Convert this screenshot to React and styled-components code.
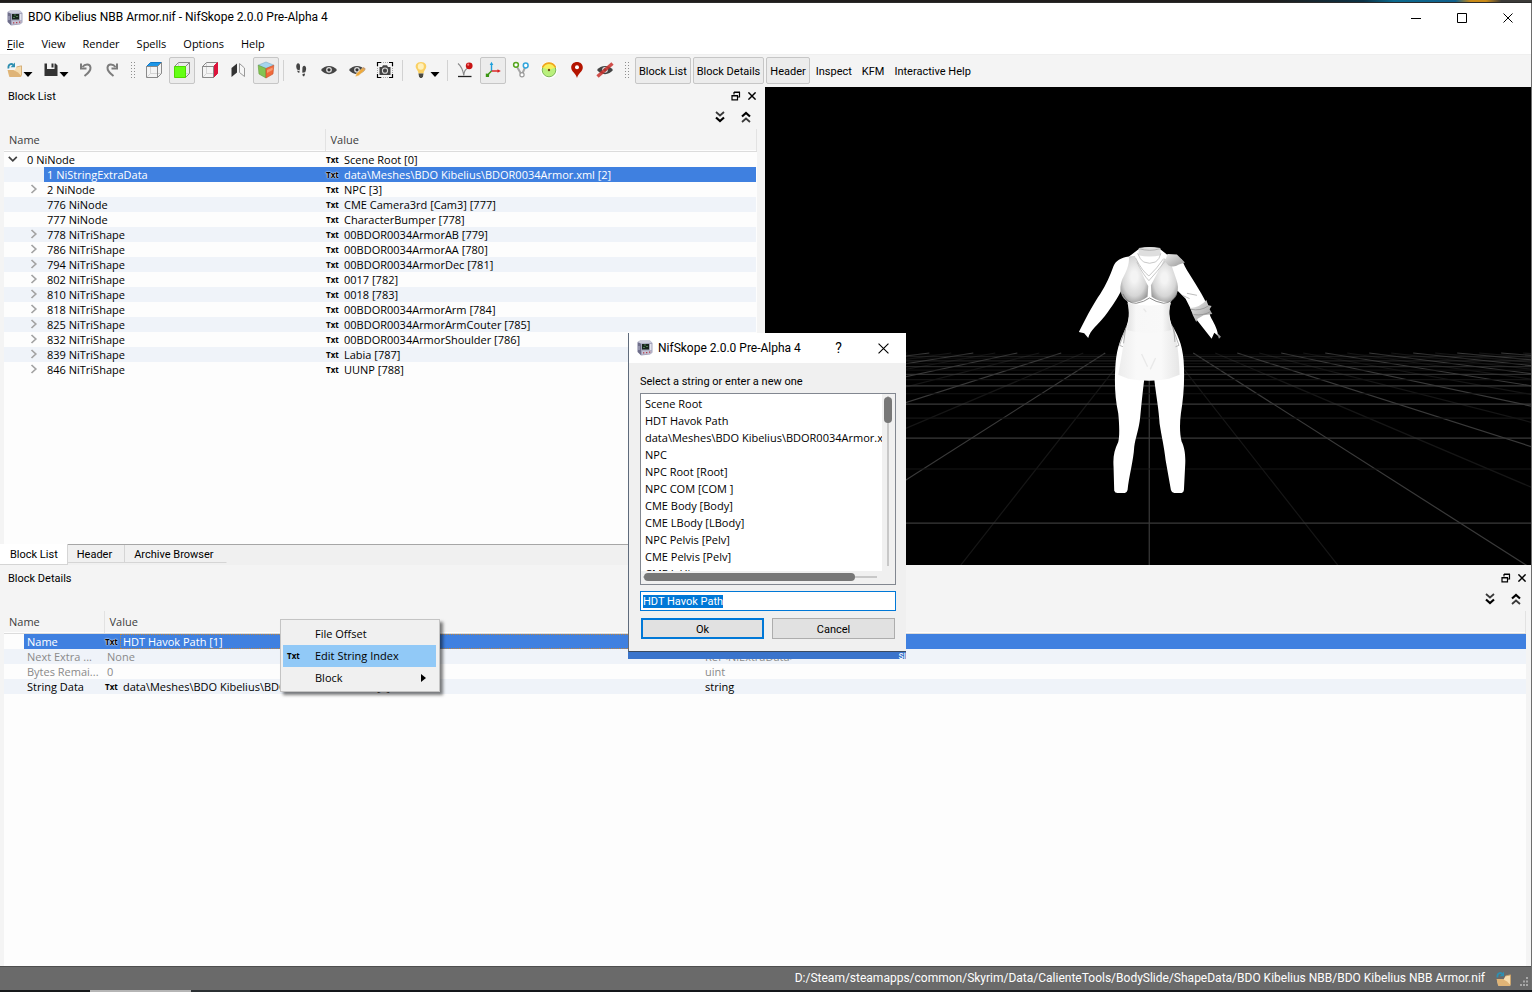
import React, { useEffect, useRef } from "react";
import styled, { createGlobalStyle, css } from "styled-components";

const uiFont = `Roboto, "Liberation Sans", sans-serif`;
const treeFont = `"Open Sans", "Noto Sans", sans-serif`;

const GlobalStyle = createGlobalStyle`
  * {
    box-sizing: border-box;
  }
  body {
    margin: 0;
    background-color: #f4f4f4;
    color: #000;
    font-family: ${uiFont};
    font-size: 11px;
    line-height: 15px;
    white-space: nowrap;
  }
  button, input {
    font: inherit;
    color: inherit;
  }
  svg {
    display: block;
    flex-shrink: 0;
  }
`;

/* window */
const Screen = styled.div`
  min-height: 100vh;
  display: flex;
  flex-direction: column;
  position: relative;
`;
const DesktopStrip = styled.div`
  height: 3px;
  background: linear-gradient(to right, #1f1d1c 0 83%, #0b3347 89%, #0c6a8e 91%, #10608c 95%, #c98a17 96% 97%, #3b3a38 98%);
  border-bottom: 1px solid #2b2b2b;
`;
const TaskbarStrip = styled.div`
  height: 2px;
  background: linear-gradient(to right, #17191b 0 90px, #b5b5b5 90px 191px, #2b3033 191px 250px, #14171a 250px);
`;
const Window = styled.div`
  flex: 1;
  display: flex;
  flex-direction: column;
  border-right: 1px solid #6e6e6e;
`;
const TitleBar = styled.header`
  height: 29px;
  padding-left: 7px;
  display: flex;
  align-items: center;
  background-color: #fff;
`;
const Title = styled.h1`
  margin: 0 0 0 5px;
  flex: 1;
  font-size: 12px;
  font-weight: 400;
`;
const CaptionBtn = styled.button`
  width: ${(props) => props.$width || 46}px;
  height: 29px;
  padding: 0;
  border: 0;
  background-color: transparent;
  display: flex;
  justify-content: center;
  align-items: center;
`;
const HelpBtn = styled(CaptionBtn)`
  font-size: 14px;
`;
const MenuBar = styled.nav`
  height: 23px;
  padding: 1px 7px 0;
  display: flex;
  align-items: center;
  gap: 17px;
  background-color: #fff;
  border-bottom: 1px solid #efefef;
  font-family: ${treeFont};
`;
const MenuBtn = styled.button`
  padding: 0;
  border: 0;
  background-color: transparent;
`;
const ToolBar = styled.div`
  height: 32px;
  padding: 0 0 2px 2px;
  display: flex;
  align-items: center;
  gap: 2px;
`;
const ToolBtn = styled.button`
  width: ${(props) => props.$width || 26}px;
  height: 27px;
  padding: 0;
  border: 1px solid transparent;
  border-radius: 2px;
  background-color: transparent;
  display: flex;
  justify-content: center;
  align-items: center;
  ${(props) =>
    props.$checked &&
    css`
      border-color: #c6c6c6;
      background-color: #ececec;
    `}
`;
const SplitBtn = styled(ToolBtn)`
  padding-left: 4px;
  justify-content: flex-start;
`;
const TextBtn = styled(ToolBtn)`
  width: auto;
  padding: 2px 3px 0;
`;
const Grip = styled.div`
  width: 13px;
  height: 18px;
  border: solid transparent;
  border-width: 0 4px;
  background-image: radial-gradient(#8f8f8f 1px, transparent 1px);
  background-size: 3px 3px;
  background-clip: padding-box;
`;
const Separator = styled.div`
  width: 5px;
  height: 21px;
  border-left: 2px solid transparent;
  border-right: 2px solid transparent;
  background-color: #d2d2d2;
  background-clip: padding-box;
`;

/* docks */
const Work = styled.main`
  flex: 1;
  display: grid;
  grid-template-rows: 478fr 401fr;
`;
const Upper = styled.div`
  display: grid;
  grid-template-columns: calc(50% - 1px) 1fr;
  min-height: 0;
`;
const Dock = styled.section`
  display: flex;
  flex-direction: column;
  min-width: 0;
  padding-top: ${(props) => props.$top || 0}px;
`;
const DockTitle = styled.div`
  height: 18px;
  padding: 0 ${(props) => props.$right}px 0 8px;
  display: flex;
  align-items: center;
`;
const DockName = styled.h2`
  margin: 0;
  flex: 1;
  font-size: 11px;
  font-weight: 400;
`;
const DockTools = styled.div`
  height: 24px;
  padding-right: ${(props) => props.$right}px;
  display: flex;
  justify-content: flex-end;
  align-items: center;
  gap: 4px;
`;
const SmallBtn = styled.button`
  width: ${(props) => props.$width || 16}px;
  height: 16px;
  padding: 0;
  border: 0;
  background-color: transparent;
  display: flex;
  justify-content: center;
  align-items: center;
`;
const TreeBox = styled.div`
  flex: 1;
  margin-left: 4px;
  margin-right: ${(props) => props.$right}px;
  background: linear-gradient(#f4f4f4 21px, #fdfdfd 21px);
  font-family: ${treeFont};
`;
const Tree = styled.table`
  width: 100%;
  table-layout: fixed;
  border-collapse: collapse;
`;
const Th = styled.th`
  height: 22px;
  padding: 0 5px 1px;
  text-align: left;
  font-size: 11px;
  font-weight: 400;
  color: #3c3c3c;
  border-right: 1px solid #e2e2e2;
  border-bottom: 1px solid #dcdcdc;
`;
const Tr = styled.tr`
  height: 15px;
  color: ${(props) => (props.$disabled ? "#8a8a8a" : "#000")};
  &:nth-child(even) {
    background-color: #eff3f9;
  }
`;
const Td = styled.td`
  padding: 0;
`;
const Cell = styled.div`
  height: 15px;
  display: flex;
  align-items: center;
`;
const Branch = styled.span`
  width: ${(props) => (props.$level + 1) * 20}px;
  padding-right: 6px;
  display: flex;
  justify-content: flex-end;
  flex-shrink: 0;
`;
const CellText = styled.span`
  flex: 1;
  min-width: 0;
  height: 15px;
  padding-left: 3px;
  overflow: hidden;
  text-overflow: ellipsis;
  line-height: 15px;
  outline: ${(props) => (props.$focused ? "1px dotted #c0863c" : "0")};
  outline-offset: -1px;
  ${(props) =>
    props.$selected &&
    css`
      background-color: #3f80e0;
      color: #fff;
    `}
`;
const TxtTag = styled.span`
  width: 16px;
  height: 15px;
  padding-left: 1px;
  flex-shrink: 0;
  color: #000;
  font-size: 8px;
  line-height: 15px;
  font-weight: 700;
  ${(props) =>
    props.$selected &&
    css`
      background-color: #3f80e0;
      text-shadow: 0 0 2px #fff, 0 0 1px #fff;
    `}
`;
const Tabs = styled.div`
  height: 21px;
  display: flex;
  align-items: flex-start;
  border-top: 1px solid #a6a6a6;
  background-color: #f0f0f0;
`;
const Tab = styled.button`
  height: ${(props) => (props.$active ? 21 : 18)}px;
  margin-top: ${(props) => (props.$active ? -1 : 0)}px;
  padding: 1px ${(props) => (props.$active ? 9 : 12)}px 0 ${(props) => (props.$active ? 10 : 9)}px;
  border: 0;
  border-right: 1px solid #d5d5d5;
  border-bottom: 1px solid #d5d5d5;
  background-color: ${(props) => (props.$active ? "#fff" : "#f0f0f0")};
  &:last-child {
    border-right-color: transparent;
  }
`;
const View = styled.div`
  background-color: #000;
  min-height: 0;
  min-width: 0;
  overflow: hidden;
  contain: size;
  svg {
    width: 100%;
    height: 100%;
  }
`;
const StatusBar = styled.footer`
  height: 24px;
  padding-right: 2px;
  display: flex;
  justify-content: flex-end;
  align-items: center;
  gap: 11px;
  background-color: #6a6a6a;
  border-top: 1px solid #4e4e4e;
  color: #fff;
  font-size: 12px;
`;
const StatusIcons = styled.div`
  display: flex;
  align-items: flex-end;
  gap: 7px;
`;

/* context menu */
const ContextMenu = styled.div`
  position: absolute;
  left: 280px;
  top: 619px;
  width: 160px;
  padding: 3px 3px 2px 2px;
  border: 1px solid #c4c4c4;
  background-color: #f0f0f0;
  box-shadow: 3px 3px 3px rgba(0, 0, 0, 0.5);
  font-family: ${treeFont};
`;
const ContextItem = styled.button`
  width: 100%;
  height: 22px;
  padding: 0 10px 1px 4px;
  border: 0;
  display: flex;
  align-items: center;
  text-align: left;
  background-color: ${(props) => (props.$active ? "#91c9f7" : "transparent")};
`;
const ContextIcon = styled.span`
  width: 28px;
  font-size: 8px;
  font-weight: 700;
`;
const ContextLabel = styled.span`
  flex: 1;
`;

/* dialog */
const DialogBox = styled.div`
  position: absolute;
  left: 628px;
  top: 333px;
  width: 278px;
`;
const Dialog = styled.form`
  background-color: #f0f0f0;
  border-left: 1px solid #5f6b7c;
  border-bottom: 1px solid #3a4a60;
`;
const DialogTitle = styled.div`
  height: 30px;
  padding-left: 8px;
  display: flex;
  align-items: center;
  background-color: #fff;
  font-size: 12px;
`;
const DialogName = styled.span`
  margin-left: 5px;
  flex: 1;
`;
const DialogBody = styled.div`
  padding: 11px 10px 12px 11px;
  display: flex;
  flex-direction: column;
`;
const DialogLabel = styled.label`
  height: 19px;
`;
const ListBox = styled.div`
  height: 192px;
  border: 1px solid #828790;
  padding: 2px 0 0 2px;
  display: grid;
  grid-template-columns: 1fr 13px;
  grid-template-rows: 1fr 13px;
  background-color: #f0f0f0;
`;
const List = styled.ul`
  margin: -2px 0 0 -2px;
  padding: 1px 0 0 4px;
  min-height: 0;
  min-width: 0;
  overflow: hidden;
  list-style: none;
  font-family: ${treeFont};
  background-color: #fff;
`;
const ListItem = styled.li`
  height: 17px;
  line-height: 17px;
`;
const VTrack = styled.div`
  margin: 0 0 5px 5px;
  border-left: 2px solid #c8c8c8;
`;
const VThumb = styled.div`
  width: 8px;
  height: 26px;
  margin: 1px 0 0 -5px;
  border-radius: 4px;
  background-color: #777;
`;
const HTrack = styled.div`
  margin: 5px 5px 0 0;
  border-top: 2px solid #c8c8c8;
`;
const HThumb = styled.div`
  width: 90%;
  height: 8px;
  margin: -5px 0 0 1px;
  border-radius: 4px;
  background-color: #777;
`;
const TextInput = styled.input`
  height: 20px;
  margin-top: 6px;
  padding: 1px 2px 0;
  border: 1px solid #0078d7;
  outline: 0;
  background-color: #fff;
  &::selection {
    background-color: #0078d7;
    color: #fff;
  }
`;
const DialogBtns = styled.div`
  margin: 7px 1px 0;
  display: grid;
  grid-template-columns: 1fr 1fr;
  gap: 8px;
`;
const DialogBtn = styled.button`
  height: 21px;
  padding: 1px 0 0;
  border: ${(props) => (props.$primary ? "2px solid #0078d7" : "1px solid #adadad")};
  background-color: #e1e1e1;
`;
const DialogTrail = styled.div`
  height: 7px;
  overflow: hidden;
  background-color: #3a74cc;
  color: #fff;
  text-align: right;
  font-size: 10px;
  line-height: 7px;
`;

const blocks = [
  { id: "0 NiNode", value: "Scene Root [0]", level: 0, open: true },
  { id: "1 NiStringExtraData", value: "data\\Meshes\\BDO Kibelius\\BDOR0034Armor.xml [2]", level: 1, leaf: true, selected: true },
  { id: "2 NiNode", value: "NPC [3]", level: 1 },
  { id: "776 NiNode", value: "CME Camera3rd [Cam3] [777]", level: 1, leaf: true },
  { id: "777 NiNode", value: "CharacterBumper [778]", level: 1, leaf: true },
  { id: "778 NiTriShape", value: "00BDOR0034ArmorAB [779]", level: 1 },
  { id: "786 NiTriShape", value: "00BDOR0034ArmorAA [780]", level: 1 },
  { id: "794 NiTriShape", value: "00BDOR0034ArmorDec [781]", level: 1 },
  { id: "802 NiTriShape", value: "0017 [782]", level: 1 },
  { id: "810 NiTriShape", value: "0018 [783]", level: 1 },
  { id: "818 NiTriShape", value: "00BDOR0034ArmorArm [784]", level: 1 },
  { id: "825 NiTriShape", value: "00BDOR0034ArmorArmCouter [785]", level: 1 },
  { id: "832 NiTriShape", value: "00BDOR0034ArmorShoulder [786]", level: 1 },
  { id: "839 NiTriShape", value: "Labia [787]", level: 1 },
  { id: "846 NiTriShape", value: "UUNP [788]", level: 1 },
];

const details = [
  { name: "Name", value: "HDT Havok Path [1]", type: "string", txt: true, selected: true },
  { name: "Next Extra ...", value: "None", type: "Ref<NiExtraData>", disabled: true },
  { name: "Bytes Remai...", value: "0", type: "uint", disabled: true },
  { name: "String Data", value: "data\\Meshes\\BDO Kibelius\\BDOR0034Armor.xml [2]", type: "string", txt: true },
];

const strings = [
  "Scene Root",
  "HDT Havok Path",
  "data\\Meshes\\BDO Kibelius\\BDOR0034Armor.xml",
  "NPC",
  "NPC Root [Root]",
  "NPC COM [COM ]",
  "CME Body [Body]",
  "CME LBody [LBody]",
  "NPC Pelvis [Pelv]",
  "CME Pelvis [Pelv]",
  "CME L Hip",
];

/* icons */
const AppIcon = () => (
  <svg width="16" height="16" viewBox="0 0 16 16">
    <path d="M0.5 2 L3 0.5 H13 L15.5 3 V12.5 L13 14.5 L4 15.5 L0.5 12 Z" fill="#a3a3bb" />
    <path d="M0.8 2.5 L4 3.5 V15 L0.8 12 Z" fill="#6e6e8a" />
    <path d="M1 2 L3 0.8 H13 L15 2.8 L4 3.5 Z" fill="#cdcddd" />
    <rect x="5" y="4" width="7" height="5.5" fill="#18241d" />
    <path d="M7 5 H9 M6 7.5 H8 M9 6.5 H11" stroke="#4d7d55" fill="none" />
    <rect x="13" y="4" width="1.5" height="6" fill="#e4e4ee" />
    <path d="M5 10.8 L14.5 10.5 V13.5 L5 14.5 Z" fill="#c3c3d4" />
    <path d="M6 12.8 H7.3 M9 12.6 H10.3 M12 12.2 H13.3" stroke="#b33a48" strokeWidth="1.3" />
    <path d="M2 6 V10" stroke="#b5b5cb" />
  </svg>
);
const DropArrow = () => (
  <svg width="10" height="16" viewBox="0 0 10 16">
    <path d="M0.5 10 H9.5 L5 15 Z" fill="#000" />
  </svg>
);
const FolderIcon = () => (
  <svg width="16" height="16" viewBox="0 0 16 16">
    <path d="M1 8.5 H7.5 L9.5 5 L14.5 4 V14.5 H2 Z" fill="#f6dcae" />
    <path d="M0.5 8 H6.5 L11 10.5 L14.5 14 L13.5 15 H2.5 Z" fill="#dfb477" />
    <path d="M9.5 5 L14.5 3.8 V13.5" stroke="#cfa263" strokeWidth="0.8" fill="none" />
    <path d="M1.5 6.5 C0.8 2.5 4 1 6.3 2.8" stroke="#2e8fb0" strokeWidth="1.8" fill="none" />
    <path d="M8 0.5 V5.2 H3.6 Z" fill="#2e8fb0" />
  </svg>
);
const SaveIcon = () => (
  <svg width="16" height="16" viewBox="0 0 16 16">
    <path d="M1.5 1.5 H4 V7 H11.5 V1.5 H12.5 L14.5 3.5 V14 H1.5 Z" fill="#333" />
    <rect x="8.5" y="1.5" width="2" height="4" fill="#333" />
  </svg>
);
const UndoIcon = () => (
  <svg width="16" height="16" viewBox="0 0 16 16">
    <path d="M4.5 5 C7 1.5 12 1.5 12.5 5.5 C12.8 8.5 10.5 11 6.5 14" stroke="#7c7c7c" strokeWidth="2" fill="none" />
    <path d="M3 1.5 V6.6 H8.5" stroke="#7c7c7c" strokeWidth="2" fill="none" />
  </svg>
);
const RedoIcon = () => (
  <svg width="16" height="16" viewBox="0 0 16 16">
    <path d="M11.5 5 C9 1.5 4 1.5 3.5 5.5 C3.2 8.5 5.5 11 9.5 14" stroke="#7c7c7c" strokeWidth="2" fill="none" />
    <path d="M13 1.5 V6.6 H7.5" stroke="#7c7c7c" strokeWidth="2" fill="none" />
  </svg>
);
const CubeIcon = ({ top, front, side }) => (
  <svg width="18" height="18" viewBox="0 0 18 18">
    <path d="M5.5 1.5 V12.5 M5.5 12.5 H16.5 M5.5 12.5 L1.5 16.5" stroke="#cdcdcd" strokeWidth="0.8" />
    <path d="M1.5 5.5 L5.5 1.5 H16.5 L12.5 5.5 Z" fill={top || "none"} stroke={top ? "#0f78c8" : "#8a8a8a"} />
    <path d="M12.5 5.5 L16.5 1.5 V12.5 L12.5 16.5 Z" fill={side || "none"} stroke={side || "#8a8a8a"} />
    <path d="M1.5 5.5 H12.5 V16.5 H1.5 Z" fill={front || "none"} stroke={front ? "#4fd800" : "#8a8a8a"} />
  </svg>
);
const FlipIcon = () => (
  <svg width="16" height="16" viewBox="0 0 16 16">
    <path d="M7 1.5 V10.5 L1.5 15 V6 Z" fill="#333" />
    <path d="M9.5 1.5 L14.5 6 V14.5 L9.5 10.5 Z" fill="#f6f6f6" stroke="#999" />
  </svg>
);
const PerspectiveIcon = () => (
  <svg width="18" height="18" viewBox="0 0 18 18">
    <path d="M1.2 4.2 L9 1 L16.8 4.2 L9 7.5 Z" fill="#a5d4ee" stroke="#7fa9c2" strokeWidth="0.6" />
    <path d="M1.2 4.2 L9 7.5 V17 L2 13 Z" fill="#84c452" stroke="#5f9a3a" strokeWidth="0.6" />
    <path d="M16.8 4.2 L9 7.5 V17 L16 13 Z" fill="#f0693a" stroke="#c9522a" strokeWidth="0.6" />
    <path d="M10 9 L15.6 6.4 V9 L10 12 Z" fill="#f79a70" />
  </svg>
);
const StepsIcon = () => (
  <svg width="16" height="16" viewBox="0 0 16 16">
    <path d="M3.6 2.5 C4.8 0.2 7 1.5 7 4 C7 6 7 7 6.6 8.4 L4 7.6 C3.4 6 2.8 4.2 3.6 2.5 Z" fill="#444" />
    <path d="M4.2 8.6 L6.6 9.2 C6.8 11.4 4.6 11.4 4.2 8.6 Z" fill="#444" />
    <path d="M12.8 5 C11.6 2.8 9.4 4 9.4 6.4 C9.4 8.4 9.2 9.4 9.4 10.8 L12.2 10.2 C12.9 8.5 13.6 6.8 12.8 5 Z" fill="#444" />
    <path d="M12 11.4 L9.5 11.9 C9.3 15.2 12 14.9 12 11.4 Z" fill="#444" />
  </svg>
);
const EyeIcon = ({ pencil, slash }) => (
  <svg width="18" height="16" viewBox="0 0 18 16">
    <path d="M1 8 C5 2.5 13 2.5 17 8 C13 13.5 5 13.5 1 8 Z" fill="#444" />
    <circle cx="9" cy="7.8" r="2.9" fill="#ddd" />
    <circle cx="9" cy="7.8" r="1.6" fill="#333" />
    {pencil && (
      <>
        <path d="M7.5 14.5 L8.5 11.5 L14.5 6 L16.8 8 L10.8 13.6 Z" fill="#efa93a" stroke="#f7e2bd" strokeWidth="0.5" />
        <path d="M14.5 6 L15.6 5 L17.8 7 L16.8 8 Z" fill="#c96" />
      </>
    )}
    {slash && <path d="M1.5 14.5 L16.5 1.5" stroke="#c9302c" strokeOpacity="0.85" strokeWidth="3.4" />}
  </svg>
);
const CameraIcon = () => (
  <svg width="18" height="18" viewBox="0 0 18 18">
    <path d="M1.5 5 V1.5 H5 M13 1.5 H16.5 V5 M16.5 13 V16.5 H13 M5 16.5 H1.5 V13" stroke="#000" strokeWidth="1.2" fill="none" />
    <path d="M5 1.5 H13 M5 16.5 H13 M1.5 5 V13 M16.5 5 V13" stroke="#aaa" strokeDasharray="1 1" fill="none" />
    <path d="M3.5 6 H6 L7 4.3 H11 L12 6 H14.5 V14 H3.5 Z" fill="#444" />
    <circle cx="9" cy="9.7" r="3.1" fill="#ddd" />
    <circle cx="9" cy="9.7" r="2.1" fill="#444" />
  </svg>
);
const BulbIcon = () => (
  <svg width="18" height="18" viewBox="0 0 18 18">
    <path d="M9 1 C4.6 1 3 4.2 4 7 C4.8 9 6.2 9.6 6.5 12.5 H11.5 C11.8 9.6 13.2 9 14 7 C15 4.2 13.4 1 9 1 Z" fill="#fad063" />
    <ellipse cx="8.8" cy="5.5" rx="3" ry="3.2" fill="#fff0ba" />
    <path d="M6.5 12.5 H11.5 L11 15.5 L9.8 17 H8.2 L7 15.5 Z" fill="#4a4a42" />
  </svg>
);
const BallIcon = () => (
  <svg width="18" height="18" viewBox="0 0 18 18">
    <path d="M2 2.5 C5 5 7 9 7.8 14.5 C8 10 9.5 8 12 7" stroke="#888" strokeWidth="1.1" fill="none" />
    <path d="M2 15.5 H15.5" stroke="#222" strokeWidth="1.3" />
    <circle cx="13.2" cy="4.8" r="3.4" fill="#c81414" />
    <circle cx="12.2" cy="3.7" r="1.1" fill="#f27a7a" />
  </svg>
);
const AxesIcon = () => (
  <svg width="18" height="18" viewBox="0 0 18 18">
    <path d="M7.5 10 V3" stroke="#1ea0dc" strokeWidth="1.4" />
    <path d="M7.5 0.8 L9.3 4 H5.7 Z" fill="#1ea0dc" />
    <path d="M7.5 10 H14" stroke="#d81e1e" strokeWidth="1.4" />
    <path d="M16.8 10 L13.5 8.2 V11.8 Z" fill="#d81e1e" />
    <path d="M7.5 10 L3.5 14" stroke="#3c9614" strokeWidth="1.4" />
    <path d="M1.8 12.4 L5.2 13 L5 16 L1.8 16 Z" fill="#3c9614" />
  </svg>
);
const NodesIcon = () => (
  <svg width="18" height="18" viewBox="0 0 18 18">
    <path d="M4.5 5 L9.8 14 L13.2 6" stroke="#a6a6a6" strokeWidth="2" fill="none" />
    <circle cx="4" cy="3.8" r="2.4" fill="#fff" stroke="#56a51e" strokeWidth="1.5" />
    <circle cx="13.7" cy="4.5" r="2.4" fill="#fff" stroke="#32a5dc" strokeWidth="1.5" />
    <circle cx="10" cy="13.8" r="2.1" fill="#fff" stroke="#999" strokeWidth="1.2" />
  </svg>
);
const CircleIcon = () => (
  <svg width="18" height="18" viewBox="0 0 18 18">
    <circle cx="9" cy="9" r="8.6" fill="#fff" />
    <circle cx="9" cy="9" r="6.8" fill="#b9f07c" stroke="#7fb55a" />
    <path d="M2.6 6.5 C5 0.6 13 0.6 15.4 6.5 L9 9 Z" fill="#f6f05a" />
    <path d="M2.4 6.5 C5 0.6 13 0.6 15.6 6.5" stroke="#f0a51e" strokeWidth="1.6" fill="none" />
    <circle cx="9" cy="9" r="1.2" fill="#6b4a14" />
  </svg>
);
const PinIcon = () => (
  <svg width="18" height="18" viewBox="0 0 18 18">
    <path d="M9 17 C8 12.5 3.2 10.5 3.2 6.5 C3.2 3.2 5.8 1 9 1 C12.2 1 14.8 3.2 14.8 6.5 C14.8 10.5 10 12.5 9 17 Z" fill="#b41400" />
    <circle cx="9" cy="6.3" r="2" fill="#fff" />
  </svg>
);
const FloatIcon = () => (
  <svg width="10" height="10" viewBox="0 0 10 10">
    <path d="M3 3.5 V1.5 H8.5 V6 H6.5 M3 1 H9" stroke="#000" strokeWidth="1.2" fill="none" />
    <path d="M1 4.5 H6.5 V8.8 H1 Z M1 5 H6.5" stroke="#000" strokeWidth="1.2" fill="none" />
  </svg>
);
const CloseIcon = ({ size, stroke }) => (
  <svg width={size} height={size} viewBox="0 0 10 10">
    <path d="M0.5 0.5 L9.5 9.5 M9.5 0.5 L0.5 9.5" stroke="#000" strokeWidth={stroke} />
  </svg>
);
const DoubleChevron = ({ up }) => (
  <svg width="10" height="12" viewBox="0 0 10 12" transform={up ? "rotate(180)" : undefined}>
    <path d="M1 1 L5 4.5 L9 1" stroke="#3a3a3a" strokeWidth="1.8" fill="none" />
    <path d="M1 6.5 L5 10 L9 6.5" stroke="#000" strokeWidth="2.2" fill="none" />
  </svg>
);
const Chevron = ({ open }) =>
  open ? (
    <svg width="10" height="10" viewBox="0 0 10 10">
      <path d="M0.8 2.8 L4.8 6.8 L8.8 2.8" stroke="#404040" strokeWidth="1.7" fill="none" />
    </svg>
  ) : (
    <svg width="8" height="10" viewBox="0 0 8 10">
      <path d="M1.5 1 L5.8 5 L1.5 9" stroke="#a3a3a3" strokeWidth="1.7" fill="none" />
    </svg>
  );
const SizeGrip = () => (
  <svg width="10" height="10" viewBox="0 0 10 10">
    <path d="M7 1 H9 M4 4.5 H6 M7 4.5 H9 M1 8 H3 M4 8 H6 M7 8 H9" stroke="#a8a8a8" strokeWidth="2" />
  </svg>
);

/* 3d viewport: the ground grid runs to one vanishing point */
const VX = 1149;
const VY = 325;
const FAR = 353;
const NEAR = 566;

const groundRows = [];
for (let i = 0; i <= 15; i++) {
  groundRows.push({ y: VY + 1 / (0.00505 + 0.0019 * i), major: i % 2 === 0 });
}
const groundCols = [];
for (let i = -17; i <= 17; i++) {
  groundCols.push({ slope: i * 0.785, major: i % 2 === 0 });
}
const lineColor = (major) => (major ? "#3a3a3a" : "#161616");

const Viewport = () => (
  <View>
    <svg viewBox="765 87 766 478" preserveAspectRatio="xMidYMid slice" role="img" aria-label="Model">
      <defs>
        <radialGradient id="cup" cx="0.5" cy="0.45" r="0.6">
          <stop offset="0.2" stopColor="#f4f4f4" />
          <stop offset="0.7" stopColor="#d6d6d6" />
          <stop offset="1" stopColor="#9c9c9c" />
        </radialGradient>
        <linearGradient id="waist" x1="0" x2="1">
          <stop offset="0" stopColor="#cfcfcf" />
          <stop offset="0.2" stopColor="#f6f6f6" />
          <stop offset="0.8" stopColor="#f8f8f8" />
          <stop offset="1" stopColor="#cccccc" />
        </linearGradient>
        <linearGradient id="skirt" x1="0" x2="1">
          <stop offset="0" stopColor="#ececec" />
          <stop offset="0.3" stopColor="#f9f9f9" />
          <stop offset="0.7" stopColor="#f9f9f9" />
          <stop offset="1" stopColor="#e6e6e6" />
        </linearGradient>
        <linearGradient id="pad" x1="0" x2="1" y2="1">
          <stop offset="0" stopColor="#ececec" />
          <stop offset="1" stopColor="#999" />
        </linearGradient>
      </defs>
      {groundCols.map((c) => (
        <line
          key={c.slope}
          x1={VX + c.slope * (FAR - VY)}
          y1={FAR}
          x2={VX + c.slope * (NEAR - VY)}
          y2={NEAR}
          stroke={lineColor(c.major)}
          strokeWidth="1.2"
        />
      ))}
      {groundRows.map((r) => (
        <line
          key={r.y}
          x1="765"
          y1={r.y}
          x2="1531"
          y2={r.y}
          stroke={lineColor(r.major)}
          strokeOpacity={Math.min(1, 0.4 + (r.y - FAR) / 50)}
          strokeWidth="1.2"
        />
      ))}
      <g transform="translate(1060 230) scale(0.3333)">
        <path d="M235 58 L206 80 C180 84 168 92 160 108 C150 135 138 165 120 192 C102 218 84 250 56 306 L72 310 L84 324 C90 300 112 286 134 258 C158 226 172 204 184 180 L205 222 C210 250 206 268 200 288 C184 320 170 350 166 400 C162 460 164 500 174 550 C178 590 178 620 174 636 C162 660 158 680 160 710 L162 782 Q164 789 172 789 L194 789 Q200 788 202 780 C206 740 220 690 222 650 C226 620 236 600 240 560 C244 520 248 480 252 448 L282 448 C288 500 296 540 298 580 C304 620 312 650 316 690 L332 780 Q334 788 342 789 L364 789 Q370 788 371 780 L375 700 C376 670 372 650 364 634 C358 610 358 580 362 550 C370 500 374 450 370 390 C366 340 350 310 334 284 C326 260 324 240 330 218 L352 182 L376 206 L396 246 L408 268 L454 326 L462 308 L474 318 C470 290 458 276 450 258 L440 224 C420 180 390 140 374 110 L364 88 L320 74 L300 58 Q268 46 235 58 Z" fill="#fff" />
        <path d="M202 218 Q268 236 332 218 C322 250 328 272 340 300 C350 330 356 370 358 434 L326 446 Q268 458 204 446 L174 434 C182 390 190 350 194 300 C208 270 208 246 202 218 Z" fill="url(#skirt)" />
        <path d="M202 218 Q268 236 332 218 C322 250 326 272 334 300 Q268 320 200 300 C208 270 208 246 202 218 Z" fill="url(#waist)" fillOpacity="0.5" />
        <path d="M206 80 C208 106 198 126 186 148 C174 180 182 206 206 216 Q236 220 262 200 L264 168 C254 150 236 110 224 78 Z" fill="url(#cup)" />
        <path d="M330 92 C334 110 342 130 348 148 C360 180 350 206 326 216 Q300 218 274 200 L272 166 C286 140 302 112 312 86 Z" fill="url(#cup)" />
        <path d="M188 192 Q200 220 228 220 Q252 216 268 204 Q286 216 310 220 Q338 218 350 192" stroke="#777" strokeWidth="2.5" fill="none" />
        <path d="M236 54 Q268 48 300 54 L302 76 Q268 84 234 76 Z" fill="#dedede" />
        <path d="M236 56 Q268 66 300 56" stroke="#9a9a9a" strokeWidth="2" fill="none" />
        <path d="M232 70 Q240 90 250 96 Q268 104 286 96 Q298 88 302 70 M226 84 Q246 124 266 138 Q290 116 310 86 M230 96 Q248 134 266 152 Q292 124 314 94" stroke="#bdbdbd" strokeWidth="2.5" fill="none" />
        <path d="M322 72 L350 74 L374 98 L356 104 Q340 114 324 106 L314 94 Z" fill="url(#pad)" />
        <path d="M390 234 Q420 232 438 210 L444 226 L454 228 L448 238 L456 252 L430 256 L412 266 L408 276 L398 256 Z" fill="url(#pad)" />
        <path d="M392 238 Q420 244 444 228 M400 254 Q430 258 452 244" stroke="#888" strokeWidth="2" fill="none" />
        <path d="M366 196 L388 206 M380 190 L410 196" stroke="#9a9a9a" strokeWidth="2" />
        <path d="M470 308 L482 320 L476 326 Z" fill="#999" />
        <path d="M196 296 L190 340 M200 286 L178 346 L188 350 M340 292 L344 336 M334 284 L356 346 L346 350" stroke="#8f8f8f" strokeWidth="2" fill="none" />
        <path d="M250 236 L258 246 M286 384 L270 418 M244 372 L262 410" stroke="#e9e9e9" strokeWidth="4" fill="none" />
      </g>
    </svg>
  </View>
);

const DockHeader = ({ title, right = 0 }) => (
  <>
    <DockTitle $right={1 + right}>
      <DockName>{title}</DockName>
      <SmallBtn aria-label="Float">
        <FloatIcon />
      </SmallBtn>
      <SmallBtn aria-label="Close">
        <CloseIcon size={8} stroke={1.8} />
      </SmallBtn>
    </DockTitle>
    <DockTools $right={4 + right}>
      <SmallBtn $width={22} aria-label="Expand all">
        <DoubleChevron />
      </SmallBtn>
      <SmallBtn $width={22} aria-label="Collapse all">
        <DoubleChevron up />
      </SmallBtn>
    </DockTools>
  </>
);

const BlockList = () => (
  <TreeBox $right={8}>
    <Tree>
      <colgroup>
        <col style={{ width: 321 }} />
        <col />
      </colgroup>
      <thead>
        <tr>
          <Th>Name</Th>
          <Th>Value</Th>
        </tr>
      </thead>
      <tbody>
        {blocks.map((block) => (
          <Tr key={block.id}>
            <Td>
              <Cell>
                <Branch $level={block.level}>{!block.leaf && <Chevron open={block.open} />}</Branch>
                <CellText $selected={block.selected}>{block.id}</CellText>
              </Cell>
            </Td>
            <Td>
              <Cell>
                <TxtTag $selected={block.selected}>Txt</TxtTag>
                <CellText $selected={block.selected}>{block.value}</CellText>
              </Cell>
            </Td>
          </Tr>
        ))}
      </tbody>
    </Tree>
  </TreeBox>
);

const BlockDetails = () => (
  <TreeBox $right={5}>
    <Tree>
      <colgroup>
        <col style={{ width: 100 }} />
        <col style={{ width: 598 }} />
        <col />
      </colgroup>
      <thead>
        <tr>
          <Th>Name</Th>
          <Th>Value</Th>
          <Th>Type</Th>
        </tr>
      </thead>
      <tbody>
        {details.map((row) => (
          <Tr key={row.name} $disabled={row.disabled}>
            <Td>
              <Cell>
                <Branch $level={0} />
                <CellText $selected={row.selected}>{row.name}</CellText>
              </Cell>
            </Td>
            <Td>
              <Cell>
                {row.txt && <TxtTag $selected={row.selected}>Txt</TxtTag>}
                <CellText $selected={row.selected} $focused={row.selected}>
                  {row.value}
                </CellText>
              </Cell>
            </Td>
            <Td>
              <Cell>
                <CellText $selected={row.selected}>{row.type}</CellText>
              </Cell>
            </Td>
          </Tr>
        ))}
      </tbody>
    </Tree>
  </TreeBox>
);

const StringDialog = () => {
  const inputRef = useRef(null);

  useEffect(() => {
    inputRef.current.focus();
    inputRef.current.select();
  }, []);

  return (
    <DialogBox>
      <Dialog onSubmit={(e) => e.preventDefault()}>
        <DialogTitle>
          <AppIcon />
          <DialogName>NifSkope 2.0.0 Pre-Alpha 4</DialogName>
          <HelpBtn type="button" $width={45}>
            ?
          </HelpBtn>
          <CaptionBtn type="button" $width={45} aria-label="Close">
            <CloseIcon size={11} stroke={1} />
          </CaptionBtn>
        </DialogTitle>
        <DialogBody>
          <DialogLabel htmlFor="string">Select a string or enter a new one</DialogLabel>
          <ListBox>
            <List>
              {strings.map((text) => (
                <ListItem key={text}>{text}</ListItem>
              ))}
            </List>
            <VTrack>
              <VThumb />
            </VTrack>
            <HTrack>
              <HThumb />
            </HTrack>
          </ListBox>
          <TextInput id="string" ref={inputRef} defaultValue="HDT Havok Path" />
          <DialogBtns>
            <DialogBtn $primary>Ok</DialogBtn>
            <DialogBtn type="button">Cancel</DialogBtn>
          </DialogBtns>
        </DialogBody>
      </Dialog>
      <DialogTrail>si</DialogTrail>
    </DialogBox>
  );
};

const App = () => {
  return (
    <Screen>
      <GlobalStyle />
      <DesktopStrip />
      <Window>
        <TitleBar>
          <AppIcon />
          <Title>BDO Kibelius NBB Armor.nif - NifSkope 2.0.0 Pre-Alpha 4</Title>
          <CaptionBtn aria-label="Minimize">
            <svg width="10" height="10" viewBox="0 0 10 10">
              <path d="M0 5.5 H10" stroke="#000" />
            </svg>
          </CaptionBtn>
          <CaptionBtn aria-label="Maximize">
            <svg width="10" height="10" viewBox="0 0 10 10">
              <path d="M0.5 0.5 H9.5 V9.5 H0.5 Z" stroke="#000" fill="none" />
            </svg>
          </CaptionBtn>
          <CaptionBtn aria-label="Close">
            <CloseIcon size={10} stroke={1} />
          </CaptionBtn>
        </TitleBar>
        <MenuBar>
          <MenuBtn>
            <u>F</u>ile
          </MenuBtn>
          <MenuBtn>View</MenuBtn>
          <MenuBtn>Render</MenuBtn>
          <MenuBtn>Spells</MenuBtn>
          <MenuBtn>Options</MenuBtn>
          <MenuBtn>Help</MenuBtn>
        </MenuBar>
        <ToolBar>
          <SplitBtn $width={34} aria-label="Open">
            <FolderIcon />
            <DropArrow />
          </SplitBtn>
          <SplitBtn $width={34} aria-label="Save">
            <SaveIcon />
            <DropArrow />
          </SplitBtn>
          <ToolBtn $width={24} aria-label="Undo">
            <UndoIcon />
          </ToolBtn>
          <ToolBtn $width={24} aria-label="Redo">
            <RedoIcon />
          </ToolBtn>
          <Grip />
          <ToolBtn aria-label="Top view">
            <CubeIcon top="#1e96e6" />
          </ToolBtn>
          <ToolBtn $checked aria-label="Front view">
            <CubeIcon front="#64ff14" />
          </ToolBtn>
          <ToolBtn aria-label="Side view">
            <CubeIcon side="#dc143c" />
          </ToolBtn>
          <ToolBtn aria-label="Flip view">
            <FlipIcon />
          </ToolBtn>
          <ToolBtn $checked aria-label="Perspective">
            <PerspectiveIcon />
          </ToolBtn>
          <Separator />
          <ToolBtn aria-label="Walk">
            <StepsIcon />
          </ToolBtn>
          <ToolBtn aria-label="Load view">
            <EyeIcon />
          </ToolBtn>
          <ToolBtn aria-label="Save view">
            <EyeIcon pencil />
          </ToolBtn>
          <ToolBtn aria-label="Screenshot">
            <CameraIcon />
          </ToolBtn>
          <Separator />
          <SplitBtn $width={36} aria-label="Lighting">
            <BulbIcon />
            <DropArrow />
          </SplitBtn>
          <Separator />
          <ToolBtn aria-label="Collision">
            <BallIcon />
          </ToolBtn>
          <ToolBtn $checked aria-label="Axes">
            <AxesIcon />
          </ToolBtn>
          <ToolBtn aria-label="Nodes">
            <NodesIcon />
          </ToolBtn>
          <ToolBtn aria-label="Constraints">
            <CircleIcon />
          </ToolBtn>
          <ToolBtn aria-label="Markers">
            <PinIcon />
          </ToolBtn>
          <ToolBtn aria-label="Hidden">
            <EyeIcon slash />
          </ToolBtn>
          <Grip />
          <TextBtn $checked>Block List</TextBtn>
          <TextBtn $checked>Block Details</TextBtn>
          <TextBtn $checked>Header</TextBtn>
          <TextBtn>Inspect</TextBtn>
          <TextBtn>KFM</TextBtn>
          <TextBtn>Interactive Help</TextBtn>
        </ToolBar>
        <Work>
          <Upper>
            <Dock>
              <DockHeader title="Block List" right={4} />
              <BlockList />
              <Tabs>
                <Tab $active>Block List</Tab>
                <Tab>Header</Tab>
                <Tab>Archive Browser</Tab>
              </Tabs>
            </Dock>
            <Viewport />
          </Upper>
          <Dock $top={4}>
            <DockHeader title="Block Details" />
            <BlockDetails />
          </Dock>
        </Work>
        <StatusBar>
          <span>D:/Steam/steamapps/common/Skyrim/Data/CalienteTools/BodySlide/ShapeData/BDO Kibelius NBB/BDO Kibelius NBB Armor.nif</span>
          <StatusIcons>
            <FolderIcon />
            <SizeGrip />
          </StatusIcons>
        </StatusBar>
      </Window>
      <TaskbarStrip />
      <ContextMenu>
        <ContextItem>
          <ContextIcon />
          <ContextLabel>File Offset</ContextLabel>
        </ContextItem>
        <ContextItem $active>
          <ContextIcon>Txt</ContextIcon>
          <ContextLabel>Edit String Index</ContextLabel>
        </ContextItem>
        <ContextItem>
          <ContextIcon />
          <ContextLabel>Block</ContextLabel>
          <svg width="5" height="8" viewBox="0 0 5 8">
            <path d="M0 0 L5 4 L0 8 Z" fill="#000" />
          </svg>
        </ContextItem>
      </ContextMenu>
      <StringDialog />
    </Screen>
  );
};

export default App;
